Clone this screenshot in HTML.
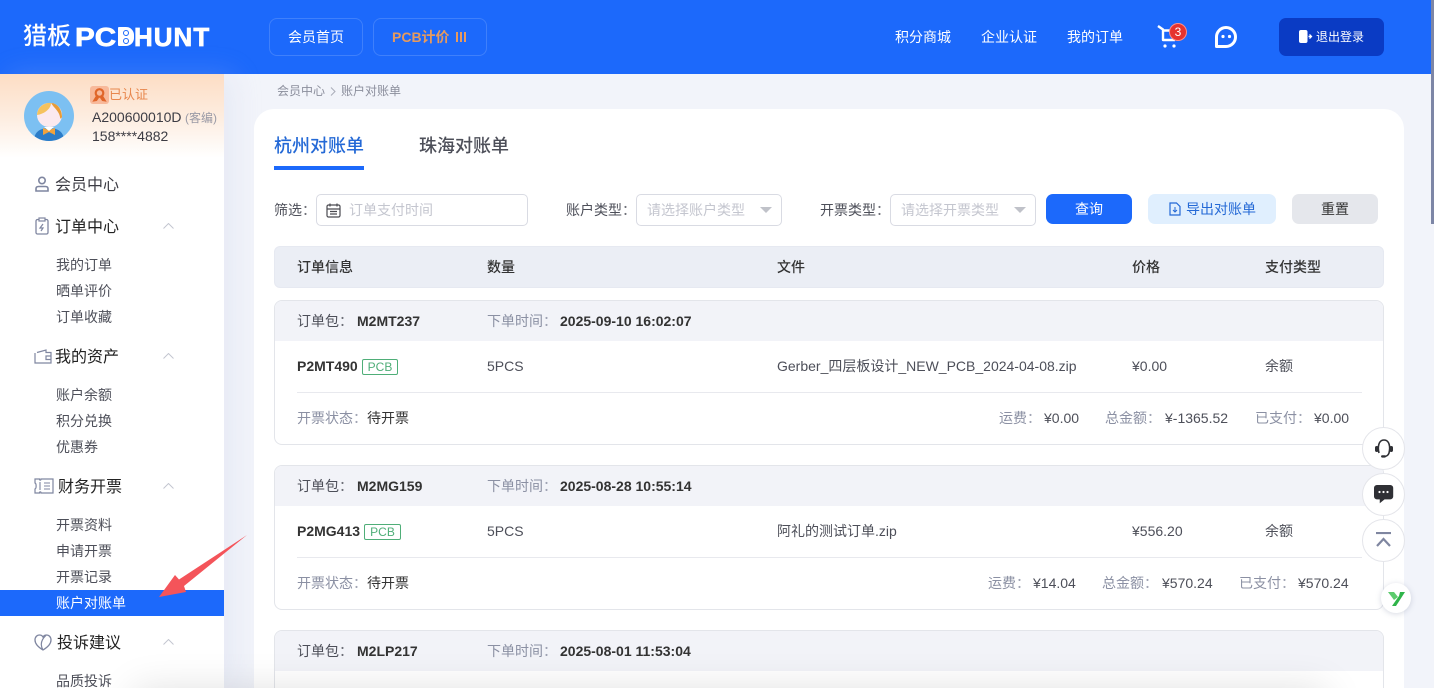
<!DOCTYPE html>
<html lang="zh-CN"><head><meta charset="utf-8"><title>账户对账单</title>
<style>
*{box-sizing:border-box;margin:0;padding:0}
html,body{width:1434px;height:688px;overflow:hidden;background:#f2f4fa}
body{position:relative;font-family:"Liberation Sans","Noto Sans CJK SC",sans-serif;font-size:14px;color:#333}
.a,.t{position:absolute}
.t{white-space:nowrap;line-height:20px}
.g{color:#8b90a3}
.b{font-weight:700;color:#333}
.s{color:#4d4f59}
i{font-style:normal;font-family:"Noto Sans CJK TC",sans-serif;opacity:.8}
svg{position:absolute;display:block}
</style></head><body>

<!-- top bar -->
<div class="a" style="left:0;top:0;width:1434px;height:74px;background:#1c69fb"></div>
<div class="t" style="left:23px;top:20px;font-size:24px;line-height:34px;color:#fff;font-weight:500">猎板</div>
<div class="t" style="left:75px;top:20px;font-size:26px;line-height:34px;color:#fff;font-weight:700;-webkit-text-stroke:.7px #fff;transform-origin:left center;transform:scaleX(1.14)">PC</div>
<div class="a" style="left:118px;top:27px;width:16px;height:19px;background:#fff;border-radius:1px 8px 8px 1px"></div>
<div class="a" style="left:123px;top:30px;width:6px;height:6px;border:1.5px solid #1c69fb;border-radius:50%"></div>
<div class="a" style="left:123px;top:38px;width:6px;height:6px;border:1.5px solid #1c69fb;border-radius:50%"></div>
<div class="t" style="left:134px;top:20px;font-size:26px;line-height:34px;color:#fff;font-weight:700;letter-spacing:1px;-webkit-text-stroke:.7px #fff">HUNT</div>

<div class="a" style="left:269px;top:18px;width:94px;height:38px;border:1px solid #3f80fb;border-radius:8px"></div>
<div class="t" style="left:288px;top:27px;color:#fff">会员首页</div>
<div class="a" style="left:373px;top:18px;width:114px;height:38px;border:1px solid #3f80fb;border-radius:8px"></div>
<div class="t" style="left:392px;top:27px;color:#e59a5f;font-weight:700">PCB计价</div>
<div class="a" style="left:456px;top:32px;width:2px;height:10px;background:#e59a5f"></div>
<div class="a" style="left:460px;top:32px;width:2px;height:10px;background:#e59a5f"></div>
<div class="a" style="left:464px;top:32px;width:2px;height:10px;background:#e59a5f"></div>

<div class="t" style="left:895px;top:27px;color:#fff">积分商城</div>
<div class="t" style="left:981px;top:27px;color:#fff">企业认证</div>
<div class="t" style="left:1067px;top:27px;color:#fff">我的订单</div>

<svg style="left:1156px;top:24px" width="26" height="26" viewBox="0 0 26 26"><path d="M2 2l5 3.500V16h12" fill="none" stroke="#fff" stroke-width="2.400" stroke-linejoin="round"/><path d="M7 6.500h14l-1.500 9.500" fill="none" stroke="#fff" stroke-width="2.400"/><circle cx="9" cy="22" r="1.600" fill="#fff"/><circle cx="18" cy="22" r="1.600" fill="#fff"/></svg>
<div class="a" style="left:1169px;top:23px;width:18px;height:18px;border-radius:50%;background:#e5332f;border:1px solid #ff8d88;color:#fff;font-size:12px;line-height:16px;text-align:center">3</div>
<svg style="left:1214px;top:25px" width="24" height="24" viewBox="0 0 24 24"><path d="M2.500 21.500V12a9.500 9.500 0 1 1 9.500 9.500z" fill="none" stroke="#fff" stroke-width="3" stroke-linejoin="round"/><circle cx="9" cy="11.500" r="1.600" fill="#fff"/><circle cx="15.500" cy="11.500" r="1.600" fill="#fff"/></svg>

<div class="a" style="left:1279px;top:18px;width:105px;height:38px;background:#0a3bc4;border-radius:7px"></div>
<svg style="left:1298px;top:29px" width="15" height="15" viewBox="0 0 15 15"><rect x="1" y="1" width="8.500" height="13" rx="2" fill="#fff"/><path d="M7 7.500h6.500M11.500 5.500l2 2-2 2" stroke="#fff" stroke-width="1.300" fill="none"/><path d="M9.500 7h1v1h-1z" fill="#0a3bc4"/></svg>
<div class="t" style="left:1316px;top:27px;color:#fff;font-size:12px">退出登录</div>
<div class="a" style="left:1431px;top:0;width:3px;height:224px;background:#7d86a6"></div>

<!-- sidebar -->
<div class="a" style="left:0;top:74px;width:224px;height:614px;background:#fff;box-shadow:10px 0 26px rgba(190,200,230,.22)"></div>
<div class="a" style="left:0;top:74px;width:224px;height:84px;background:linear-gradient(180deg,#fdddc4 0%,#fdeee2 55%,#fff 100%)"></div>

<svg style="left:24px;top:91px" width="50" height="50" viewBox="0 0 50 50"><defs><clipPath id="c"><circle cx="25" cy="25" r="25"/></clipPath></defs><g clip-path="url(#c)"><rect width="50" height="50" fill="#7cc0f2"/><path d="M10 50c0-9 6-13 15-13s15 4 15 13z" fill="#2b7cc8"/><rect x="13" y="12" width="25" height="24" rx="12" fill="#fbe9ee"/><path d="M19 37l6 2 6-2v7l-6-3-6 3z" fill="#f0a23c"/><path d="M20 36h10l-5 4z" fill="#fff"/><path d="M13 24A12.500 12.500 0 0 1 27 12C27 18 20 23 13 24z" fill="#f5c25e"/><path d="M27 12C33 12 38 18 38 26 37 28 36 28 36 26 35 20 30 17 27 12z" fill="#e89c37"/></g></svg>

<div class="a" style="left:90px;top:86px;width:19px;height:18px;background:#f8b99a;border-radius:3px"></div>
<svg style="left:92px;top:87px" width="15" height="16" viewBox="0 0 15 16"><circle cx="7.500" cy="6" r="3.800" fill="none" stroke="#e0662a" stroke-width="2.200"/><path d="M4.500 9L1.500 14l3-.5 2-3M10.500 9l3 5-3-.5-2-3" fill="#e0662a" stroke="#e0662a" stroke-width="1.200"/></svg>
<div class="t" style="left:109px;top:85px;font-size:13px;color:#e8874d">已认证</div>
<div class="t" style="left:92px;top:107px;color:#3c3c44">A200600010D</div>
<div class="t" style="left:185px;top:108px;font-size:12px;color:#9a9aa6">(客编)</div>
<div class="t" style="left:92px;top:126px;color:#3c3c44">158****4882</div>

<svg style="left:35px;top:176px" width="14" height="16" viewBox="0 0 14 16"><circle cx="7" cy="4.500" r="3.200" fill="none" stroke="#7f86a0" stroke-width="1.600"/><path d="M1 15v-2.200c0-1.500 1-2.300 2.500-2.300h7c1.500 0 2.500.8 2.500 2.300V15z" fill="none" stroke="#7f86a0" stroke-width="1.600"/></svg>
<div class="t" style="left:55px;top:176px;font-size:16px;color:#3c3c44">会员中心</div>

<svg style="left:35px;top:217px" width="14" height="18" viewBox="0 0 14 18"><rect x="1" y="2.500" width="12" height="14.500" rx="1.500" fill="none" stroke="#7f86a0" stroke-width="1.300"/><rect x="4" y="1" width="6" height="3" fill="#fff" stroke="#7f86a0" stroke-width="1.200"/><path d="M8 7l-3 4h3l-2 3" fill="none" stroke="#7f86a0" stroke-width="1.200"/></svg>
<div class="t" style="left:55px;top:218px;font-size:16px;color:#222">订单中心</div>

<div class="t" style="left:56px;top:255px;color:#4d4f59">我的订单</div>
<div class="t" style="left:56px;top:281px;color:#4d4f59">晒单评价</div>
<div class="t" style="left:56px;top:307px;color:#4d4f59">订单收藏</div>

<svg style="left:34px;top:349px" width="18" height="15" viewBox="0 0 18 15"><path d="M1 4v10h16V3.500H12V1L3 3.500" fill="none" stroke="#7f86a0" stroke-width="1.200"/><path d="M17 7h-5v3.500h5" fill="none" stroke="#7f86a0" stroke-width="1.200"/></svg>
<div class="t" style="left:55px;top:348px;font-size:16px;color:#222">我的资产</div>
<div class="t" style="left:56px;top:385px;color:#4d4f59">账户余额</div>
<div class="t" style="left:56px;top:411px;color:#4d4f59">积分兑换</div>
<div class="t" style="left:56px;top:437px;color:#4d4f59">优惠券</div>

<svg style="left:34px;top:478px" width="20" height="16" viewBox="0 0 20 16"><path d="M1 1h4.500c0 1.500 1.500 1.500 1.500 0H19v14H7c0-1.500-1.500-1.500-1.500 0H1v-4c1.500-.5 1.500-5.500 0-6z" fill="none" stroke="#7f86a0" stroke-width="1.200"/><path d="M6 4v8M10 5h6M10 8h6M10 11h6" stroke="#7f86a0" stroke-width="1.100"/></svg>
<div class="t" style="left:58px;top:478px;font-size:16px;color:#222">财务开票</div>
<div class="t" style="left:56px;top:515px;color:#4d4f59">开票资料</div>
<div class="t" style="left:56px;top:541px;color:#4d4f59">申请开票</div>
<div class="t" style="left:56px;top:567px;color:#4d4f59">开票记录</div>
<div class="a" style="left:0;top:590px;width:224px;height:26px;background:#1c69fb"></div>
<div class="t" style="left:56px;top:593px;color:#fff">账户对账单</div>

<svg style="left:34px;top:634px" width="18" height="17" viewBox="0 0 18 17"><path d="M9 16C4 13 1 10 1 6c0-3 2-5 4.500-5C7 1 8.300 1.800 9 3c.7-1.200 2-2 3.500-2C15 1 17 3 17 6c0 4-3 7-8 10z" fill="none" stroke="#7f86a0" stroke-width="1.300"/><path d="M9 16C6 11 7 6 12 1.300" fill="none" stroke="#7f86a0" stroke-width="1.200"/></svg>
<div class="t" style="left:57px;top:634px;font-size:16px;color:#222">投诉建议</div>
<div class="t" style="left:56px;top:671px;color:#4d4f59">品质投诉</div>

<svg style="left:163px;top:223px" width="11" height="6" viewBox="0 0 11 6"><path d="M.5 5.500l5-5 5 5" fill="none" stroke="#c3c6d0"/></svg>
<svg style="left:163px;top:353px" width="11" height="6" viewBox="0 0 11 6"><path d="M.5 5.500l5-5 5 5" fill="none" stroke="#c3c6d0"/></svg>
<svg style="left:163px;top:483px" width="11" height="6" viewBox="0 0 11 6"><path d="M.5 5.500l5-5 5 5" fill="none" stroke="#c3c6d0"/></svg>
<svg style="left:163px;top:639px" width="11" height="6" viewBox="0 0 11 6"><path d="M.5 5.500l5-5 5 5" fill="none" stroke="#c3c6d0"/></svg>

<!-- arrow -->
<svg style="left:150px;top:530px" width="100" height="72" viewBox="0 0 100 72"><path d="M97 5L34 56 36 62 9 67 25 45 29 49.500z" fill="#f4545a"/></svg>

<!-- main -->
<div class="t" style="left:277px;top:81px;font-size:12px;color:#8b8e9c">会员中心</div>
<svg style="left:330px;top:87px" width="6" height="9" viewBox="0 0 6 9"><path d="M1 .5l4 4-4 4" fill="none" stroke="#a9acb8"/></svg>
<div class="t" style="left:341px;top:81px;font-size:12px;color:#8b8e9c">账户对账单</div>

<div class="a" style="left:254px;top:109px;width:1150px;height:600px;background:#fff;border-radius:20px 20px 0 0"></div>

<div class="t" style="left:274px;top:134px;font-size:18px;line-height:24px;font-weight:500;color:#2469d6">杭州对账单</div>
<div class="a" style="left:274px;top:166px;width:90px;height:4px;background:#1c69fb"></div>
<div class="t" style="left:419px;top:134px;font-size:18px;line-height:24px;font-weight:500;color:#4d4f59">珠海对账单</div>

<!-- filters -->
<div class="t s" style="left:274px;top:200px">筛选<i>：</i></div>
<div class="a" style="left:316px;top:194px;width:212px;height:32px;border:1px solid #d9dbe3;border-radius:5px"></div>
<svg style="left:326px;top:203px" width="15" height="15" viewBox="0 0 15 15"><rect x="1" y="2" width="13" height="12" rx="1.500" fill="none" stroke="#4a4a50" stroke-width="1.200"/><path d="M1 6h13M4 .5v3M11 .5v3M4 8.500h7M4 11h7" stroke="#4a4a50" stroke-width="1.200"/></svg>
<div class="t" style="left:349px;top:200px;color:#c4c6cf">订单支付时间</div>

<div class="t s" style="left:566px;top:200px">账户类型<i>：</i></div>
<div class="a" style="left:636px;top:194px;width:146px;height:32px;border:1px solid #d9dbe3;border-radius:5px"></div>
<div class="t" style="left:647px;top:200px;color:#c4c6cf">请选择账户类型</div>
<div class="a" style="left:760px;top:207px;width:0;height:0;border:6px solid transparent;border-top:6px solid #c0c2c9;border-bottom:0"></div>

<div class="t s" style="left:820px;top:200px">开票类型<i>：</i></div>
<div class="a" style="left:890px;top:194px;width:146px;height:32px;border:1px solid #d9dbe3;border-radius:5px"></div>
<div class="t" style="left:901px;top:200px;color:#c4c6cf">请选择开票类型</div>
<div class="a" style="left:1014px;top:207px;width:0;height:0;border:6px solid transparent;border-top:6px solid #c0c2c9;border-bottom:0"></div>

<div class="a" style="left:1046px;top:194px;width:86px;height:30px;background:#1c69fb;border-radius:7px"></div>
<div class="t" style="left:1075px;top:199px;color:#fff">查询</div>
<div class="a" style="left:1148px;top:194px;width:128px;height:30px;background:#e0effe;border-radius:7px"></div>
<svg style="left:1169px;top:202px" width="12" height="14" viewBox="0 0 12 14"><path d="M1 1h6.500L11 4.500V13H1z" fill="none" stroke="#2469d6" stroke-width="1.200"/><path d="M6 5v5M4 8l2 2 2-2" fill="none" stroke="#2469d6" stroke-width="1"/></svg>
<div class="t" style="left:1186px;top:199px;color:#2469d6">导出对账单</div>
<div class="a" style="left:1292px;top:194px;width:86px;height:30px;background:#e5e7ec;border-radius:7px"></div>
<div class="t" style="left:1321px;top:199px;color:#333">重置</div>

<!-- table header -->
<div class="a" style="left:274px;top:246px;width:1110px;height:42px;background:#ebeef5;border:1px solid #e6e9f1;border-radius:6px"></div>
<div class="t" style="left:297px;top:257px;color:#333;font-weight:500">订单信息</div>
<div class="t" style="left:487px;top:257px;color:#333;font-weight:500">数量</div>
<div class="t" style="left:777px;top:257px;color:#333;font-weight:500">文件</div>
<div class="t" style="left:1132px;top:257px;color:#333;font-weight:500">价格</div>
<div class="t" style="left:1265px;top:257px;color:#333;font-weight:500">支付类型</div>

<!-- card 1 -->
<div class="a" style="left:274px;top:300px;width:1110px;height:145px;border:1px solid #e3e5ea;border-radius:8px;overflow:hidden;background:#fff"><div style="height:40px;background:#f2f3f8"></div></div>
<div class="t s" style="left:297px;top:311px">订单包<i>：</i></div>
<div class="t b" style="left:357px;top:311px">M2MT237</div>
<div class="t g" style="left:487px;top:311px">下单时间<i>：</i></div>
<div class="t b" style="left:560px;top:311px">2025-09-10 16:02:07</div>
<div class="t b" style="left:297px;top:356px">P2MT490</div>
<div class="a" style="left:362px;top:359px;width:36px;height:16px;border:1px solid #4fae78;border-radius:2px;color:#4fae78;font-size:12px;line-height:14px;text-align:center">PCB</div>
<div class="t s" style="left:487px;top:356px">5PCS</div>
<div class="t s" style="left:777px;top:356px">Gerber_四层板设计_NEW_PCB_2024-04-08.zip</div>
<div class="t s" style="left:1132px;top:356px">¥0.00</div>
<div class="t s" style="left:1265px;top:356px">余额</div>
<div class="a" style="left:297px;top:392px;width:1065px;height:1px;background:#e8e9ee"></div>
<div class="t g" style="left:297px;top:408px">开票状态<i>：</i></div>
<div class="t" style="left:367px;top:408px;color:#333">待开票</div>
<div class="t g" style="left:999px;top:408px">运费<i>：</i></div>
<div class="t s" style="left:1044px;top:408px">¥0.00</div>
<div class="t g" style="left:1105px;top:408px">总金额<i>：</i></div>
<div class="t s" style="left:1165px;top:408px">¥-1365.52</div>
<div class="t g" style="left:1255px;top:408px">已支付<i>：</i></div>
<div class="t s" style="left:1314px;top:408px">¥0.00</div>

<!-- card 2 -->
<div class="a" style="left:274px;top:465px;width:1110px;height:145px;border:1px solid #e3e5ea;border-radius:8px;overflow:hidden;background:#fff"><div style="height:40px;background:#f2f3f8"></div></div>
<div class="t s" style="left:297px;top:476px">订单包<i>：</i></div>
<div class="t b" style="left:357px;top:476px">M2MG159</div>
<div class="t g" style="left:487px;top:476px">下单时间<i>：</i></div>
<div class="t b" style="left:560px;top:476px">2025-08-28 10:55:14</div>
<div class="t b" style="left:297px;top:521px">P2MG413</div>
<div class="a" style="left:364px;top:524px;width:37px;height:16px;border:1px solid #4fae78;border-radius:2px;color:#4fae78;font-size:12px;line-height:14px;text-align:center">PCB</div>
<div class="t s" style="left:487px;top:521px">5PCS</div>
<div class="t s" style="left:777px;top:521px">阿礼的测试订单.zip</div>
<div class="t s" style="left:1132px;top:521px">¥556.20</div>
<div class="t s" style="left:1265px;top:521px">余额</div>
<div class="a" style="left:297px;top:557px;width:1065px;height:1px;background:#e8e9ee"></div>
<div class="t g" style="left:297px;top:573px">开票状态<i>：</i></div>
<div class="t" style="left:367px;top:573px;color:#333">待开票</div>
<div class="t g" style="left:988px;top:573px">运费<i>：</i></div>
<div class="t s" style="left:1033px;top:573px">¥14.04</div>
<div class="t g" style="left:1102px;top:573px">总金额<i>：</i></div>
<div class="t s" style="left:1162px;top:573px">¥570.24</div>
<div class="t g" style="left:1239px;top:573px">已支付<i>：</i></div>
<div class="t s" style="left:1298px;top:573px">¥570.24</div>

<!-- card 3 -->
<div class="a" style="left:274px;top:630px;width:1110px;height:145px;border:1px solid #e3e5ea;border-radius:8px;overflow:hidden;background:#fff"><div style="height:40px;background:#f2f3f8"></div></div>
<div class="t s" style="left:297px;top:641px">订单包<i>：</i></div>
<div class="t b" style="left:357px;top:641px">M2LP217</div>
<div class="t g" style="left:487px;top:641px">下单时间<i>：</i></div>
<div class="t b" style="left:560px;top:641px">2025-08-01 11:53:04</div>

<!-- floating buttons -->
<div class="a" style="left:1362px;top:427px;width:43px;height:43px;border-radius:50%;background:#fff;border:1px solid #e4e5ea"></div>
<svg style="left:1373px;top:438px" width="22" height="21" viewBox="0 0 22 21"><path d="M6 15C4.500 9 5.500 2 11 2s6.500 7 5 13c-.6 2-2.500 3.500-5 3.500" fill="none" stroke="#2f3035" stroke-width="1.600"/><rect x="2" y="8" width="3.500" height="6" rx="1.700" fill="#2f3035"/><rect x="16.500" y="8" width="3.500" height="6" rx="1.700" fill="#2f3035"/><rect x="8" y="17.200" width="5" height="2.400" rx="1.200" fill="#2f3035"/></svg>
<div class="a" style="left:1362px;top:473px;width:43px;height:43px;border-radius:50%;background:#fff;border:1px solid #e4e5ea"></div>
<svg style="left:1374px;top:485px" width="20" height="19" viewBox="0 0 20 19"><path d="M3 0h14a3 3 0 0 1 3 3v9a3 3 0 0 1-3 3h-6l-5 4v-4H3a3 3 0 0 1-3-3V3a3 3 0 0 1 3-3z" fill="#2f3035" transform="scale(.96)"/><circle cx="5.500" cy="7" r="1.100" fill="#fff"/><circle cx="9.500" cy="7" r="1.100" fill="#fff"/><circle cx="13.500" cy="7" r="1.100" fill="#fff"/></svg>
<div class="a" style="left:1362px;top:519px;width:43px;height:43px;border-radius:50%;background:#fff;border:1px solid #e4e5ea"></div>
<svg style="left:1375px;top:532px" width="18" height="16" viewBox="0 0 18 16"><path d="M1 1h15" stroke="#7f86a0" stroke-width="2.200"/><path d="M2 14l6.500-7 6.500 7" fill="none" stroke="#7f86a0" stroke-width="2.200"/></svg>
<div class="a" style="left:1381px;top:583px;width:30px;height:30px;border-radius:50%;background:#fff;box-shadow:0 1px 6px rgba(120,130,160,.3)"></div>
<svg style="left:1388px;top:591px" width="18" height="15" viewBox="0 0 18 15"><path d="M0 1h6l4 5-4 3z" fill="#5ccb6d"/><path d="M17 1L8 15H4L11 5l1-4z" fill="#2fb44a"/></svg>

<!-- bottom shadow -->
<div class="a" style="left:150px;top:706px;width:1160px;height:30px;box-shadow:0 0 40px 16px rgba(0,0,0,.13)"></div>
</body></html>
